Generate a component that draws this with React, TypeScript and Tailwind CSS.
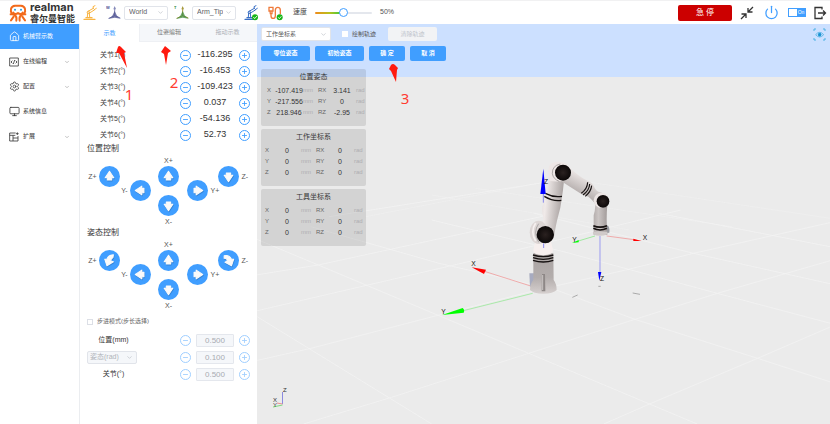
import React from "react";
import { ChevronDown, Minus, Plus, Power, Settings, Monitor, House } from "lucide-react";

const FONT = "font-['Liberation_Sans','Noto_Sans_CJK_SC',sans-serif]";

function Logo() {
  return (
    <svg width="18" height="18" viewBox="0 0 54 54" fill="none" stroke="#f26a1b" strokeWidth="6" strokeLinecap="round" strokeLinejoin="round" aria-hidden="true">
      <path d="M9 28 C3 22 4 6 18 5 H36 C50 6 51 22 45 28" />
      <path d="M13 26 C16 31 22 31 27 27 C32 31 38 31 41 26" />
      <path d="M5 31 C15 30 25 34 22 50 M49 31 C39 30 29 34 32 50" />
      <path d="M6 49 L14 38 M48 49 L40 38" />
      <circle cx="18" cy="17" r="3" fill="#1f9be0" stroke="none" />
      <circle cx="36" cy="17" r="3" fill="#1f9be0" stroke="none" />
    </svg>
  );
}

function CheckDot({ x, y }: { x: number; y: number }) {
  return (
    <g stroke="none">
      <circle cx={x} cy={y} r="9" fill="#18b518" />
      <path d={`M${x - 4} ${y} l3 4 l6 -7`} fill="none" stroke="#fff" strokeWidth="2.5" />
    </g>
  );
}

function ArmIcon({ color, checked }: { color: string; checked?: boolean }) {
  return (
    <svg width="14" height="16" viewBox="0 0 42 48" fill="none" stroke={color} strokeWidth="4" strokeLinecap="round" aria-hidden="true">
      <path d="M3 43 H36 M9 38 H27" />
      <path d="M13 36 L14 24 M20 36 L19 24" strokeWidth="3" />
      <circle cx="16" cy="22" r="3.5" strokeWidth="3" />
      <path d="M15 19 L31 10 M18 25 L34 15" strokeWidth="3" />
      <path d="M31 11 L30 5 L36 2 M34 14 L40 10" strokeWidth="3" />
      {checked && <CheckDot x={33} y={37} />}
    </svg>
  );
}

function CableIcon() {
  return (
    <svg width="15" height="16" viewBox="0 0 45 48" fill="none" stroke="#ef7a3a" strokeWidth="4" aria-hidden="true">
      <path d="M3 7 H15 V18 H3 Z M6 18 L7 26 H12 L12 18" />
      <path d="M9 26 V32 C9 43 22 43 22 32 V16 C22 4 37 4 37 16 V28" />
      <CheckDot x={35} y={37} />
    </svg>
  );
}

function FrameIcon({ letter, color, axis }: { letter: string; color: string; axis: string }) {
  return (
    <svg width="15" height="16" viewBox="0 0 45 48" aria-hidden="true">
      <text x="0" y="13" fontSize="12" fontWeight="700" fill={color} fontFamily="Liberation Sans">{letter}</text>
      <path d="M26 8 V32 L8 40 M26 32 L43 39" stroke={axis} strokeWidth="3" fill="none" />
      <path d="M26 18 L18 34 L6 42 L26 38 L44 41 L33 32 Z" fill={color} opacity="0.75" />
      <path d="M26 3 L30 13 H22 Z" fill={axis} />
    </svg>
  );
}

function Dropdown({ label, options, box, text, disabled }: { label: string; options: string[]; box: string; text: string; disabled?: boolean }) {
  return (
    <div className={`relative ${box}`}>
      <select aria-label={label} disabled={disabled} className={`block h-full w-full appearance-none rounded-[2px] border border-[#e1e4ea] pr-3 opacity-100 outline-none ${text}`}>
        {options.map((o) => <option key={o}>{o}</option>)}
      </select>
      <ChevronDown className="pointer-events-none absolute inset-y-0 right-1 my-auto text-[#b4b8c0]" size={7} strokeWidth={2} />
    </div>
  );
}

function CollapseIcon() {
  return (
    <svg width="14" height="14" viewBox="0 0 28 28" fill="none" stroke="#333" strokeWidth="2.6">
      <path d="M26 2 L16 12 M16 4 V12 H25 M2 26 L12 16 M12 24 V16 H3" />
    </svg>
  );
}

function Header() {
  return (
    <header className="flex h-6 items-center border-t border-[#f1f1f2] bg-white pr-[3px] pl-[9px]">
      <div className="flex w-[74px] items-center gap-[3px]">
        <Logo />
        <div className="flex flex-col whitespace-nowrap">
          <span className="font-['Inter',sans-serif] text-[11px] leading-[11px] font-bold text-[#333]">realman</span>
          <span className="font-['Noto_Sans_CJK_SC',sans-serif] text-[9px] leading-[11px] font-bold text-[#333]">睿尔曼智能</span>
        </div>
      </div>
      <ArmIcon color="#f9b544" />
      <div className="ml-[9px] flex items-center gap-[3px]">
        <FrameIcon letter="W" color="#4b4f8f" axis="#8489b8" />
        <Dropdown label="World frame" options={["World"]} box="h-[14px] w-[44px]" text="bg-white pl-1 text-[7px] text-[#606266]" />
      </div>
      <div className="ml-[6px] flex items-center gap-[3px]">
        <FrameIcon letter="T" color="#3d8a3d" axis="#a79a3c" />
        <Dropdown label="Tool frame" options={["Arm_Tip"]} box="h-[14px] w-[44px]" text="bg-white pl-1 text-[7px] text-[#606266]" />
      </div>
      <div className="ml-2 flex items-center gap-[10px]">
        <ArmIcon color="#3a6fc4" checked />
        <CableIcon />
      </div>
      <label htmlFor="speed" className="ml-[10px] text-[7px] text-[#444]">速度</label>
      <input
        id="speed"
        type="range"
        defaultValue={50}
        className="ml-2 h-[2px] w-[57px] appearance-none rounded-full bg-[linear-gradient(to_right,#f08a1c_0%,#b8c11c_25%,#3fc93f_45%,#e4e7ed_50%)] [&::-webkit-slider-thumb]:h-[9px] [&::-webkit-slider-thumb]:w-[9px] [&::-webkit-slider-thumb]:appearance-none [&::-webkit-slider-thumb]:rounded-full [&::-webkit-slider-thumb]:border [&::-webkit-slider-thumb]:border-[#409eff] [&::-webkit-slider-thumb]:bg-white"
      />
      <output htmlFor="speed" className="ml-2 text-[7px] text-[#555]">50%</output>
      <div className="ml-auto flex items-center">
        <button className="h-4 w-[54px] rounded-[2px] bg-[#cc0000] text-[8px] text-white">急 停</button>
        <button aria-label="收起" className="ml-2"><CollapseIcon /></button>
        <button aria-label="电源" className="ml-[10px] text-[#409eff]"><Power size={15} strokeWidth={2} /></button>
        <button aria-label="开关" className="ml-[9px] flex h-[9px] w-[18px] items-center justify-end border border-[#409eff] bg-white">
          <span className="h-full w-2 bg-[#409eff] text-center text-[5px] leading-[7px] text-white">On</span>
        </button>
        <button aria-label="退出" className="ml-[7px]">
          <svg width="14" height="14" viewBox="0 0 28 28" fill="none" stroke="#333" strokeWidth="2.6">
            <path d="M18 7 V3 H4 V25 H18 V21 M10 14 H25 M20 9 L25 14 L20 19" />
          </svg>
        </button>
      </div>
    </header>
  );
}

function CodeIcon() {
  return (
    <svg width="10" height="10" viewBox="0 0 30 30" fill="none" stroke="currentColor" strokeWidth="2.4">
      <path d="M2 3 H28 V27 H2 Z M10 11 L6 15 L10 19 M20 11 L24 15 L20 19 M17 9 L13 21" />
    </svg>
  );
}

function ExtendIcon() {
  return (
    <svg width="10" height="10" viewBox="0 0 30 30" fill="none" stroke="currentColor" strokeWidth="2.4">
      <path d="M20 3 H2 V27 H27 V12 M2 10 H19 M12 10 V27 M12 18 H27 M25 1 V9 M21 5 H29" />
    </svg>
  );
}

const NAV = [
  { label: "机械臂示教", icon: <House size={11} strokeWidth={1.8} />, active: true, more: false },
  { label: "在线编程", icon: <CodeIcon />, more: true },
  { label: "配置", icon: <Settings size={11} strokeWidth={1.6} />, more: true },
  { label: "系统信息", icon: <Monitor size={11} strokeWidth={1.8} />, more: false },
  { label: "扩展", icon: <ExtendIcon />, more: true },
];

function Sidebar() {
  return (
    <nav className="w-20 shrink-0 border-r border-[#ebedf0] bg-white">
      {NAV.map((n) => (
        <a key={n.label} href="#" className={`flex h-[25px] items-center pr-[9px] pl-[9px] text-[6px] ${n.active ? "bg-[#409eff] text-white" : "text-[#333]"}`}>
          <span className="flex w-[14px]">{n.icon}</span>
          <span className="flex-1">{n.label}</span>
          {n.more && <ChevronDown size={6} strokeWidth={2} className="text-[#888]" />}
        </a>
      ))}
    </nav>
  );
}

function Step({ kind, label, pale }: { kind: "minus" | "plus"; label: string; pale?: boolean }) {
  return (
    <button aria-label={label} disabled={pale} className={`flex h-[11px] w-[11px] shrink-0 items-center justify-center rounded-full border ${pale ? "border-[#a0cfff] text-[#a0cfff]" : "border-[#409eff] text-[#409eff]"}`}>
      {kind === "minus" ? <Minus size={7} strokeWidth={3} /> : <Plus size={7} strokeWidth={3} />}
    </button>
  );
}

const JOINTS = ["-116.295", "-16.453", "-109.423", "0.037", "-54.136", "52.73"];

const SHAPES = {
  up: "M15 3 L25 18 H20 V23 H10 V18 H5 Z",
  down: "M15 27 L25 12 H20 V7 H10 V12 H5 Z",
  left: "M3 15 L18 5 V10 H23 V20 H18 V25 Z",
  right: "M27 15 L12 5 V10 H7 V20 H12 V25 Z",
  curveLeft: "M9 27 L4 12 L9 12 C11 6 17 2 24 2 L23 8 C19 10 18 12 18 16 L24 18 Z",
  curveRight: "M22 27 L27 12 L22 12 C19 6 13 2 5 4 L5 10 C10 9 12 12 12 16 L7 19 Z",
};

function Dir({ shape, label }: { shape: keyof typeof SHAPES; label: string }) {
  return (
    <button aria-label={label} className="flex h-[21px] w-[21px] shrink-0 items-center justify-center rounded-full bg-[#409eff]">
      <svg width="13" height="13" viewBox="0 0 30 30" className="overflow-visible">
        <path d={SHAPES[shape]} transform="translate(1 2)" fill="#2a6fb8" stroke="#2a6fb8" strokeWidth="3" strokeLinejoin="round" opacity="0.55" />
        <path d={SHAPES[shape]} fill="#fafafa" stroke="#fafafa" strokeWidth="2.5" strokeLinejoin="round" />
      </svg>
    </button>
  );
}

function Pad({ title, turn }: { title: string; turn?: boolean }) {
  return (
    <section>
      <h2 className="pl-[7px] text-[8px] leading-[12px] text-[#333]">{title}</h2>
      <div className="grid grid-cols-[31px_31px_36px_31px_31px] items-start justify-center text-[7px] leading-[11px] text-[#555]">
        <div className="mt-[11px] flex items-center justify-end gap-[2px]">Z+<Dir shape={turn ? "curveLeft" : "up"} label={title + " Z+"} /></div>
        <div className="mt-[25px] flex items-center justify-end gap-[2px]">Y-<Dir shape="left" label={title + " Y-"} /></div>
        <div className="flex flex-col items-center">
          X+
          <Dir shape="up" label={title + " X+"} />
          <div className="mt-2"><Dir shape="down" label={title + " X-"} /></div>
          X-
        </div>
        <div className="mt-[25px] flex items-center gap-[3px]"><Dir shape="right" label={title + " Y+"} />Y+</div>
        <div className="mt-[11px] flex items-center gap-[3px]"><Dir shape={turn ? "curveRight" : "down"} label={title + " Z-"} />Z-</div>
      </div>
    </section>
  );
}

function StepRow({ id, value, children }: { id: string; value: string; children: React.ReactNode }) {
  return (
    <div className="flex h-[17px] items-center pr-[7px] pl-[7px]">
      <div className="flex-1">{children}</div>
      <Step kind="minus" pale label={id + " -"} />
      <input id={id} aria-label={id} disabled defaultValue={value} className="mx-[5px] h-[13px] w-[38px] rounded-[1px] border border-[#e4e7ed] bg-[#f5f7fa] text-center text-[8px] text-[#a8abb2]" />
      <Step kind="plus" pale label={id + " +"} />
    </div>
  );
}

function TeachPanel() {
  return (
    <div className="w-[177px] shrink-0 bg-white">
      <div role="tablist" className="grid h-[18px] grid-cols-3 text-[6px]">
        <button role="tab" aria-selected="true" className="text-[#409eff]">示教</button>
        <button role="tab" aria-selected="false" className="border-b border-l border-[#eef0f4] bg-[#f5f7fa] text-[#777]">位姿编辑</button>
        <button role="tab" aria-selected="false" className="border-b border-[#eef0f4] bg-[#f5f7fa] text-[#b0b3b9]">拖动示教</button>
      </div>
      <div className="pt-[5px]">
        {JOINTS.map((v, i) => (
          <div key={v} className="flex h-4 items-center pr-[7px] pl-5">
            <span className="flex-1 text-[7px] text-[#444]">关节{i + 1}(°)</span>
            <Step kind="minus" label={`关节${i + 1} -`} />
            <span className="w-12 text-center text-[9px] text-[#333]">{v}</span>
            <Step kind="plus" label={`关节${i + 1} +`} />
          </div>
        ))}
      </div>
      <div>
        <Pad title="位置控制" />
        <Pad title="姿态控制" turn />
      </div>
      <label className="flex h-[21px] items-center gap-1 pl-[7px] text-[6px] text-[#666]">
        <input type="checkbox" className="h-[6px] w-[6px] appearance-none border border-[#dcdfe6] bg-white" />
        步进模式(步长选择)
      </label>
      <div>
        <StepRow id="position-step" value="0.500">
          <label htmlFor="position-step" className="block w-[53px] text-center text-[7px] text-[#333]">位置(mm)</label>
        </StepRow>
        <StepRow id="pose-step" value="0.100">
          <Dropdown disabled label="姿态" options={["姿态(rad)"]} box="h-[13px] w-[50px]" text="bg-[#f5f7fa] pl-[2px] text-[7px] text-[#b0b3b9]" />
        </StepRow>
        <StepRow id="joint-step" value="0.500">
          <label htmlFor="joint-step" className="block w-[53px] text-center text-[7px] text-[#333]">关节(°)</label>
        </StepRow>
      </div>
    </div>
  );
}

function Card({ title, values, inset }: { title: string; values: string[]; inset: string }) {
  const names = ["X", "RX", "Y", "RY", "Z", "RZ"];
  return (
    <section className="h-[57px] w-[105px] rounded-[2px] bg-black/10">
      <h3 className="pt-px text-center text-[7px] leading-[14px] text-[#333]">{title}</h3>
      <dl className={`grid grid-cols-[47px_50px] gap-x-1 pt-px text-[6px] leading-[11px] text-[#666] ${inset}`}>
        {names.map((n, i) => (
          <div key={n} className="flex">
            <dt className={`shrink-0 ${i % 2 ? "w-[10px]" : "w-2"}`}>{n}</dt>
            <dd className="flex shrink-0">
              <span className="flex w-7 justify-center text-[7px] text-[#333]">{values[i]}</span>
              <span className="text-[#aeaeb2]">{i % 2 ? "rad" : "mm"}</span>
            </dd>
          </div>
        ))}
      </dl>
    </section>
  );
}

const ZEROS = ["0", "0", "0", "0", "0", "0"];

function Scene() {
  return (
    <svg className="absolute inset-0 h-full w-full" viewBox="257 24 573 400" preserveAspectRatio="xMidYMid slice" aria-hidden="true">
      <defs>
        <linearGradient id="metal" x1="0" x2="1" y1="0" y2="0">
          <stop offset="0" stopColor="#b5aead" /><stop offset="0.35" stopColor="#cbc5c4" /><stop offset="1" stopColor="#a19a99" />
        </linearGradient>
        <linearGradient id="base" x1="0" x2="0" y1="0" y2="1">
          <stop offset="0" stopColor="#a9a3a2" /><stop offset="0.6" stopColor="#b3adac" /><stop offset="1" stopColor="#d6d0cf" />
        </linearGradient>
        <linearGradient id="upper" x1="0" x2="1" y1="0" y2="0.2">
          <stop offset="0" stopColor="#d9d2d1" /><stop offset="0.4" stopColor="#f0eae9" /><stop offset="1" stopColor="#a9a2a1" />
        </linearGradient>
        <linearGradient id="fore" x1="0.65" x2="0.35" y1="0.2" y2="0.8">
          <stop offset="0" stopColor="#f5efee" /><stop offset="1" stopColor="#a19a99" />
        </linearGradient>
        <radialGradient id="cap"><stop offset="0" stopColor="#2a2120" /><stop offset="1" stopColor="#0c0808" /></radialGradient>
      </defs>
      <rect x="257" y="24" width="573" height="400" fill="#ebebeb" />
      <g transform="translate(256 240) scale(0.3661 0.33333)" stroke="#f3f3f3" strokeWidth="2" fill="none">
        <path d="M0 228 L480 552 M0 -3 L170 75 L745 340 L1205 552 M150 -40 L500 70 L820 150 L1035 238 L1370 355 L1600 437" />
        <path d="M480 -60 L840 35 L1260 160 L1600 259 M760 -80 L1195 40 L1600 139 M1100 -80 L1600 27" />
        <path d="M130 552 L370 472 L745 340 L1035 238 L1260 160 L1600 52 M0 362 L150 325 L500 225 L750 155 L1010 90 L1195 40 L1600 -60" />
        <path d="M0 213 L600 60 L1160 -90 M0 105 L170 75 L820 -80 M950 552 L1075 492 L1370 355 L1600 246 M200 -70 L830 -180" />
        <path d="M300 -70 L840 -185 L1600 -60 M480 -135 L1020 -30 M600 -155 L1300 -40" opacity="0.6" />
      </g>
      <g transform="translate(420 140) scale(0.33333)">
        <path d="M332 438 L190 393" stroke="#ef9d9d" strokeWidth="2.5" />
        <path d="M155 382 L198 389 L192 402 Z" fill="#f00" />
        <path d="M338 460 L130 512" stroke="#9be89b" strokeWidth="2.5" />
        <path d="M66 525 L128 504 Q135 510 131 518 Z" fill="#0f0" />
        <path d="M540 288 V398" stroke="#9c9cf0" strokeWidth="3" />
        <path d="M534 396 H544 L538 422 Z" fill="#00f" />
        <path d="M525 288 L475 303" stroke="#8fe88f" strokeWidth="2.5" />
        <path d="M456 309 L476 300 V307 Z" fill="#0f0" />
        <path d="M560 288 L642 299" stroke="#ef9d9d" strokeWidth="2.5" />
        <path d="M640 296 L665 303 L640 303 Z" fill="#f00" />
        <path d="M457 472 L473 465 M638 459 L660 463 M535 439 H542" stroke="#888" strokeWidth="2" />

        <path d="M328 400 H342 V440 H330 Z" fill="#a7abc0" />
        <path d="M340 340 H400 L401 420 Q410 432 410 450 Q400 461 370 461 Q340 461 330 450 Q330 432 340 420 Z" fill="url(#base)" />
        <path d="M366 402 H375 L376 454 H365 Z" fill="#8e8887" />
        <path d="M368 405 V450" stroke="#e8e4e3" strokeWidth="2" />
        <path d="M347 300 H392 L399 330 Q400 344 370 346 Q338 344 340 330 Z" fill="#f7efee" />
        <g fill="none" stroke="#151010" strokeWidth="4">
          <path d="M339 345 Q370 355 400 345 M339 353 Q370 363 400 353 M339 361 Q370 371 400 361" />
        </g>
        <path d="M388 100 L432 122 Q430 140 429 150 L425 178 Q422 205 414 230 Q408 252 402 290 L352 290 L350 256 Q372 248 370 232 Q362 210 370 190 L376 158 Q384 130 388 100 Z" fill="url(#upper)" />
        <path d="M376 160 Q400 173 426 169 M373 169 Q400 185 424 181" fill="none" stroke="#151010" strokeWidth="4" />
        <ellipse cx="356" cy="277" rx="27" ry="35" fill="#ddd6d5" />
        <path d="M347 249 Q330 275 347 303" fill="none" stroke="#f6f1f0" strokeWidth="5" />
        <path d="M356 251 Q338 276 356 307" fill="none" stroke="#777" strokeWidth="1.5" />
        <circle cx="376" cy="284" r="26" fill="url(#cap)" />

        <path d="M446 78 Q470 106 500 121 Q516 127 522 140 Q530 158 545 157 L548 200 L532 204 Q524 184 505 170 L484 162 L424 124 Z" fill="url(#fore)" />
        <path d="M503 127 Q502 147 484 160 M509 132 Q508 151 489 165 M515 137 Q513 155 496 169" fill="none" stroke="#151010" strokeWidth="3.500" />
        <path d="M386 105 Q380 70 405 66 Q440 62 448 84 L446 112 Q430 130 386 122 Z" fill="#eee7e6" />
        <path d="M421 72 Q396 77 397 101 Q400 118 418 124" fill="none" stroke="#8b8584" strokeWidth="2" />
        <circle cx="429" cy="98" r="24" fill="url(#cap)" />

        <path d="M526 195 H562 Q558 235 562 284 H521 V226 Q525 215 526 195 Z" fill="url(#metal)" />
        <path d="M561 256 Q570 259 568 278 L561 279 Z" fill="#999ba1" />
        <path d="M519 275 H562 V283 Q540 292 519 283 Z" fill="#d0cac9" />
        <path d="M520 257 Q540 266 561 257 M520 265 Q540 275 561 265" fill="none" stroke="#151010" strokeWidth="5" />
        <circle cx="544" cy="181" r="23" fill="#ece5e4" />
        <circle cx="549" cy="184" r="19" fill="url(#cap)" />

        <path d="M370 160 V188 M371 310 V324" stroke="#8888ec" strokeWidth="3" />
        <path d="M370 86 L377 162 H361 Z" fill="#00f" />
        <g fontFamily="Liberation Sans" fontSize="20" fill="#111">
          <text x="372" y="131">Z</text>
          <text x="154" y="379">X</text>
          <text x="64" y="522">Y</text>
          <text x="457" y="307">Y</text>
          <text x="668" y="301">X</text>
          <text x="540" y="422">Z</text>
        </g>
      </g>
      <path d="M282.500 404 V392" stroke="#8b8be0" />
      <path d="M282.500 404 L277 403" stroke="#eb9090" />
      <path d="M282.500 405 L273 407" stroke="#7fdc7f" />
      <g fontFamily="Liberation Sans" fontSize="6" fill="#333">
        <text x="283" y="392">Z</text>
        <text x="273" y="402">X</text>
        <text x="273" y="407">Y</text>
      </g>
    </svg>
  );
}

function Viewer() {
  const action = "h-[15px] rounded-[2px] bg-[#409eff] text-[6px] font-bold text-white";
  return (
    <main className="relative min-w-0 flex-1">
      <Scene />
      <div className="relative h-[53px] bg-[#cce0ff] px-1 pt-[3px]">
        <div className="flex h-[14px] items-center">
          <Dropdown label="坐标系" options={["工作坐标系"]} box="h-[14px] w-[70px]" text="bg-white pl-1 text-[6px] text-[#555]" />
          <label className="ml-[11px] flex items-center gap-1 text-[6px] text-[#555]">
            <input type="checkbox" className="h-[6px] w-[6px] appearance-none bg-white" />
            绘制轨迹
          </label>
          <button disabled className="ml-[12px] h-[14px] w-[49px] rounded-[2px] bg-[#f2f3f5] text-[6px] text-[#c0c4cc]">清除轨迹</button>
          <button aria-label="视角" className="ml-auto">
            <svg width="13" height="13" viewBox="0 0 39 39" fill="none" stroke="#4db1e3" strokeWidth="3">
              <path d="M3 9 V3 H9 M30 3 H36 V9 M36 30 V36 H30 M9 36 H3 V30" />
              <path d="M8 20 Q20 6 32 20 Q20 34 8 20 Z" strokeWidth="2.5" />
              <circle cx="20" cy="20" r="4" fill="#1492d2" stroke="#1492d2" />
            </svg>
          </button>
        </div>
        <div className="mt-[5px] flex gap-[5px]">
          <button className={`w-[49px] ${action}`}>零位姿态</button>
          <button className={`w-[49px] ${action}`}>初始姿态</button>
          <button className={`w-[36px] ${action}`}>确 定</button>
          <button className={`w-[36px] ${action}`}>取 消</button>
        </div>
      </div>
      <div className="relative mt-[-8px] flex flex-col gap-[3px] pl-1">
        <Card title="位置姿态" inset="pl-[6px]" values={["-107.419", "3.141", "-217.556", "0", "218.946", "-2.95"]} />
        <Card title="工作坐标系" inset="pl-1" values={ZEROS} />
        <Card title="工具坐标系" inset="pl-1" values={ZEROS} />
      </div>
    </main>
  );
}

function Callouts() {
  return (
    <svg className="pointer-events-none absolute top-0 left-0" width="420" height="110" viewBox="0 0 420 110">
      <g fill="#ff1a0f">
        <path d="M118 47 Q119 45 121 47 L126 52 L124 53 L127 68 L119 53 L116 53 Z" />
        <path d="M165 46 L171 51 L168 53 L166 65 L164 54 L161 52 Z" />
        <path d="M391 65 Q393 63 395 65 L398 68 L397 70 L396 82 L391 71 L389 69 Z" />
        <g fontSize="15" fontFamily="Noto Sans" textAnchor="middle" fill="#ff3b30">
          <text x="129" y="100">1</text>
          <text x="174" y="88">2</text>
          <text x="405" y="104">3</text>
        </g>
      </g>
    </svg>
  );
}

export default function App() {
  return (
    <div className={`relative flex min-h-screen flex-col bg-white ${FONT}`}>
      <Header />
      <div className="flex flex-1">
        <Sidebar />
        <TeachPanel />
        <Viewer />
      </div>
      <Callouts />
    </div>
  );
}
